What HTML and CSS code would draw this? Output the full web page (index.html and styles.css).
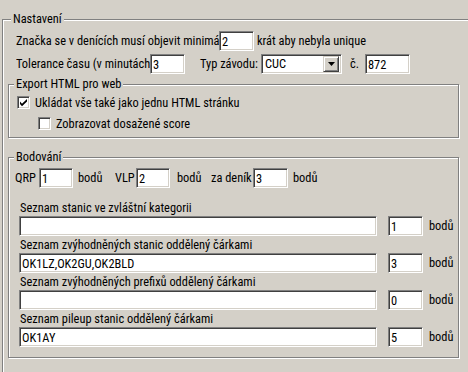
FILE: index.html
```html
<!DOCTYPE html>
<html lang="cs">
<head>
    <meta charset="UTF-8">
    <title>Nastavení</title>
    <link rel="stylesheet" href="styles.css">
</head>
<body>
    <fieldset class="group outer">
        <legend>Nastavení</legend>

        <!-- Základní nastavení -->
        <div class="row first">
            <span class="lbl w-min">Značka se v denících musí objevit minimálně</span>
            <input class="edit num" type="text" value="2">
            <span class="after">krát aby nebyla unique</span>
        </div>
        <div class="row second">
            <span class="lbl w-tol">Tolerance času (v minutách)</span>
            <input class="edit num" type="text" value="3">
            <span class="typ">Typ závodu:</span>
            <div class="combo">
                <span class="combo-text">CUC</span>
                <span class="combo-btn">
                    <svg width="7" height="4" viewBox="0 0 7 4"><path d="M0 0h7L3.5 4z" fill="#000"/></svg>
                </span>
            </div>
            <span class="cislo">č.</span>
            <input class="edit nr" type="text" value="872">
        </div>

        <!-- Export -->
        <fieldset class="group inner export">
            <legend>Export HTML pro web</legend>
            <div class="cb-row">
                <span class="cb checked">
                    <svg width="9" height="9" viewBox="0 0 9 9"><path d="M1 3.5l2 2.3L8 1v2.6L3 8.3 1 6z" fill="#000"/></svg>
                </span>
                <span>Ukládat vše také jako jednu HTML stránku</span>
            </div>
            <div class="cb-row indent">
                <span class="cb"></span>
                <span>Zobrazovat dosažené score</span>
            </div>
        </fieldset>

        <!-- Bodování -->
        <fieldset class="group inner bodovani">
            <legend>Bodování</legend>
            <div class="row points">
                <span class="lbl w-qrp">QRP</span>
                <input class="edit pts" type="text" value="1">
                <span class="lbl w-bod1">bodů</span>
                <span class="lbl w-vlp">VLP</span>
                <input class="edit pts" type="text" value="2">
                <span class="lbl w-bod2">bodů</span>
                <span class="lbl w-den">za deník</span>
                <input class="edit pts3" type="text" value="3">
                <span class="bod3">bodů</span>
            </div>

            <div class="list">
                <div class="list-label">Seznam stanic ve zvláštní kategorii</div>
                <div class="list-row">
                    <input class="edit wide" type="text" value="">
                    <input class="edit small" type="text" value="1">
                    <span class="bod">bodů</span>
                </div>
            </div>
            <div class="list">
                <div class="list-label">Seznam zvýhodněných stanic oddělený čárkami</div>
                <div class="list-row">
                    <input class="edit wide" type="text" value="OK1LZ,OK2GU,OK2BLD">
                    <input class="edit small" type="text" value="3">
                    <span class="bod">bodů</span>
                </div>
            </div>
            <div class="list">
                <div class="list-label">Seznam zvýhodněných prefixů oddělený čárkami</div>
                <div class="list-row">
                    <input class="edit wide" type="text" value="">
                    <input class="edit small" type="text" value="0">
                    <span class="bod">bodů</span>
                </div>
            </div>
            <div class="list">
                <div class="list-label">Seznam pileup stanic oddělený čárkami</div>
                <div class="list-row">
                    <input class="edit wide" type="text" value="OK1AY">
                    <input class="edit small" type="text" value="5">
                    <span class="bod">bodů</span>
                </div>
            </div>
        </fieldset>
    </fieldset>
</body>
</html>
```
FILE: styles.css
```css
/* Okno nastavení - styl Windows 9x */
body {
    margin: 0;
    height: 372px;
    overflow: hidden;
    background-color: #d4d0c8;
    color: #000;
    font-family: "Roboto Condensed", "Liberation Sans", Arial, sans-serif;
    font-size: 12.4px;
    line-height: 14px;
}

.group {
    margin: 0;
    padding: 0;
    min-width: 0;
    border: 1px solid #808080;
    box-shadow: inset 1px 1px 0 #fff, 1px 1px 0 #fff;
}

.group legend {
    padding: 0 2px;
    line-height: 14px;
    background-color: #d4d0c8;
}

.outer {
    margin: 12px 0 0 2px;
    width: 520px;
    height: 420px;
    box-sizing: border-box;
}

.outer > legend {
    margin-left: 8px;
}

.inner {
    margin-left: 5px;
    width: 451px;
    box-sizing: border-box;
}

.inner > legend {
    margin-left: 5px;
}

.row {
    display: flex;
    align-items: center;
    height: 20px;
    white-space: nowrap;
}

.first {
    margin-top: 5px;
    padding-left: 13px;
}

.second {
    margin-top: 3px;
    padding-left: 13px;
}

.lbl {
    display: block;
    overflow: hidden;
    white-space: nowrap;
    flex: none;
}

.w-min { width: 203px; }
.w-tol { width: 134px; }

.after {
    margin-left: 3px;
}

/* Editační pole */
.edit {
    box-sizing: border-box;
    height: 20px;
    margin: 0;
    padding: 0 2px;
    font: inherit;
    color: #000;
    background-color: #fff;
    border: 1px solid;
    border-color: #808080 #fff #fff #808080;
    box-shadow: inset 1px 1px 0 #404040, inset -1px -1px 0 #d4d0c8;
    outline: none;
    flex: none;
}

.num { width: 35px; }
.nr { width: 45px; }
.pts { width: 34px; }
.pts3 { width: 35px; }
.wide { width: 358px; }
.small { width: 35px; margin-left: 11px; }

.typ {
    margin-left: 15px;
    width: 61px;
}

/* Rozbalovací seznam */
.combo {
    box-sizing: border-box;
    width: 81px;
    height: 20px;
    display: flex;
    align-items: center;
    justify-content: space-between;
    background-color: #fff;
    border: 1px solid;
    border-color: #808080 #fff #fff #808080;
    box-shadow: inset 1px 1px 0 #404040, inset -1px -1px 0 #d4d0c8;
    padding: 2px 2px 2px 3px;
}

.combo-btn {
    box-sizing: border-box;
    width: 16px;
    height: 16px;
    display: flex;
    align-items: center;
    justify-content: center;
    background-color: #d4d0c8;
    border: 1px solid;
    border-color: #d4d0c8 #404040 #404040 #d4d0c8;
    box-shadow: inset 1px 1px 0 #fff, inset -1px -1px 0 #808080;
}

.cislo {
    margin-left: 8px;
    width: 15px;
}

/* Zaškrtávací pole */
.cb-row {
    display: flex;
    align-items: center;
    height: 13px;
    margin-top: 5px;
    padding-left: 8px;
}

.cb-row.indent {
    margin-top: 8px;
    padding-left: 29px;
}

.export {
    margin-top: 3px;
    padding-bottom: 7px;
}

.cb {
    box-sizing: border-box;
    width: 13px;
    height: 13px;
    margin-right: 5px;
    display: flex;
    align-items: center;
    justify-content: center;
    background-color: #fff;
    border: 1px solid;
    border-color: #808080 #fff #fff #808080;
    box-shadow: inset 1px 1px 0 #404040, inset -1px -1px 0 #d4d0c8;
}

/* Bodování */
.bodovani {
    margin-top: 12px;
    padding-bottom: 10px;
}

.points {
    margin-top: 4px;
    padding-left: 6px;
}

.w-qrp { width: 24px; }
.w-bod1 { width: 37px; margin-left: 5px; }
.w-vlp { width: 21px; }
.w-bod2 { width: 34px; margin-left: 7px; }
.w-den { width: 42px; }
.bod3 { margin-left: 5px; }

.list {
    margin-top: 2px;
}

.points + .list {
    margin-top: 13px;
}

.list-label {
    height: 14px;
    padding-left: 11px;
    white-space: nowrap;
}

.list-row {
    display: flex;
    align-items: center;
    height: 20px;
    margin-top: 1px;
    padding-left: 10px;
}

.bod {
    margin-left: 6px;
}
```
